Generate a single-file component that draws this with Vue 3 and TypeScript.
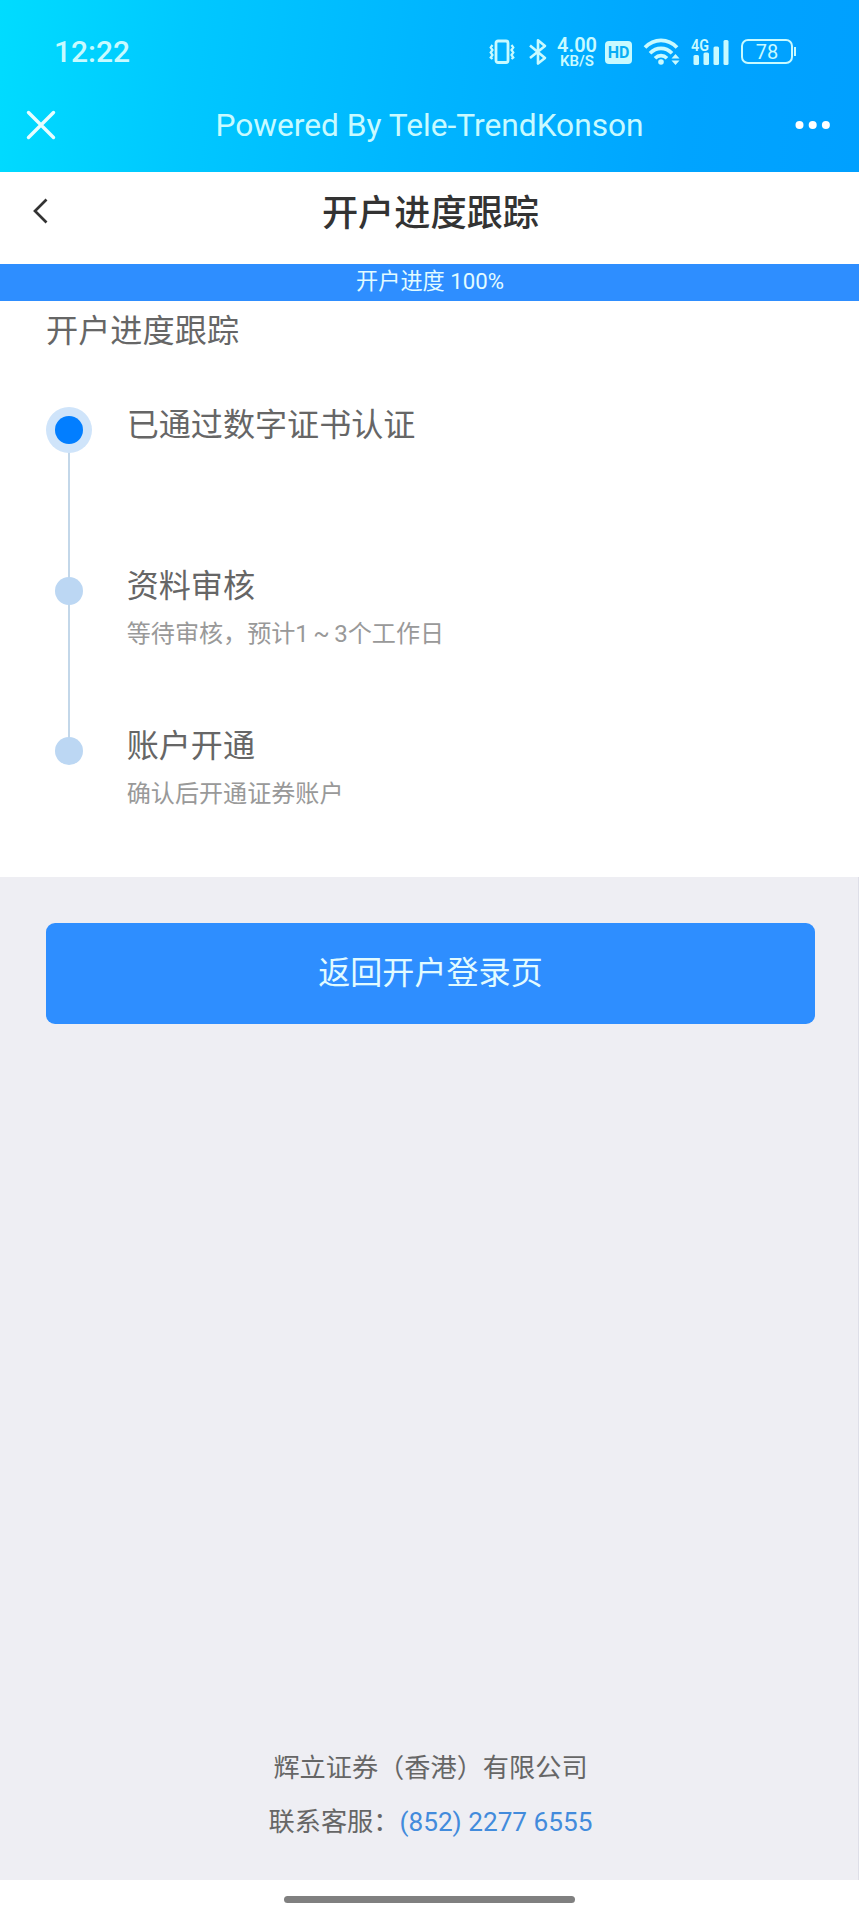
<script setup lang="ts">
interface Step {
  title: string
  note?: string
  active?: boolean
}

const steps: Step[] = [
  { title: '已通过数字证书认证', active: true },
  { title: '资料审核', note: '等待审核，预计1 ~ 3个工作日' },
  { title: '账户开通', note: '确认后开通证券账户' },
]
</script>

<template>
  <div class="screen">
    <header class="app-header">
      <div class="status">
        <span class="clock">12:22</span>
        <div class="indicators">
          <svg class="vibrate" width="28" height="28" viewBox="0 0 28 28" fill="none" stroke="currentColor" stroke-width="2.200">
            <rect x="8" y="3" width="12" height="21.500" rx="2" stroke-width="2.800" />
            <path d="M4.500 7 2.700 9.500 4.500 12 2.700 14.500 4.500 17 2.700 19.500 4.500 21M23.500 7l1.800 2.500-1.800 2.500 1.800 2.500-1.800 2.500 1.800 2.500-1.800 1.500" />
          </svg>
          <svg class="bluetooth" width="20" height="28" viewBox="0 0 20 28" fill="none" stroke="currentColor" stroke-width="2.600" stroke-linejoin="round">
            <path d="M2 7.500 17 20l-7 5.500V2.200l7 5.800L2 20" />
          </svg>
          <div class="speed">
            <span class="rate">4.00</span>
            <span class="unit">KB/S</span>
          </div>
          <span class="hd">HD</span>
          <svg class="wifi" width="38" height="30" viewBox="0 0 38 30" fill="none" stroke="currentColor" stroke-width="3.700">
            <path d="M2 11.500C11 2 25 2 34 11.500" />
            <path d="M7 17.200c6.500-6.500 15.500-6.500 22 0" />
            <path d="M12 22.300c3.500-3.500 8.500-3.500 12 0" />
            <circle cx="18" cy="26" r="2.800" fill="currentColor" stroke="none" />
            <path d="m32.500 18 4 4.500h-8zM32.500 29l4-4.500h-8z" fill="currentColor" stroke="none" />
          </svg>
          <svg class="signal" width="40" height="30" viewBox="0 0 40 30" fill="currentColor">
            <text class="network" x="1" y="14.500" textLength="18" lengthAdjust="spacingAndGlyphs">4G</text>
            <rect x="3.500" y="19" width="5.500" height="10" rx="1.500" />
            <rect x="13.500" y="16.500" width="5.500" height="12.500" rx="1.500" />
            <rect x="23.500" y="10.500" width="5.500" height="18.500" rx="1.500" />
            <rect x="33.500" y="4" width="5" height="25" rx="1.500" />
          </svg>
          <div class="battery">78</div>
        </div>
      </div>
      <div class="titlebar">
        <svg width="30" height="30" viewBox="0 0 30 30" fill="none" stroke="#e8fdff" stroke-width="3.400" stroke-linecap="round">
          <path d="m2.500 2.500 25 25m0-25-25 25" />
        </svg>
        <span class="product">Powered By Tele-TrendKonson</span>
        <svg width="36" height="10" viewBox="0 0 36 10" fill="#fff">
          <circle cx="4.500" cy="5" r="4" />
          <circle cx="17.700" cy="5" r="4" />
          <circle cx="30.900" cy="5" r="4" />
        </svg>
      </div>
    </header>

    <nav class="page-nav">
      <svg width="16" height="28" viewBox="0 0 16 28" fill="none" stroke="#333" stroke-width="2.700">
        <path d="M14.500 2.500 3 14l11.500 11.500" />
      </svg>
      <h1>开户进度跟踪</h1>
    </nav>

    <div class="progress">开户进度 100%</div>

    <section class="tracking">
      <h2>开户进度跟踪</h2>
      <ol>
        <li v-for="step in steps" :key="step.title" :class="{ active: step.active }">
          <div class="rail"><i class="dot"></i></div>
          <div class="detail">
            <h3>{{ step.title }}</h3>
            <p v-if="step.note">{{ step.note }}</p>
          </div>
        </li>
      </ol>
    </section>

    <main class="actions">
      <button type="button">返回开户登录页</button>
      <footer>
        <p>辉立证券（香港）有限公司</p>
        <p>联系客服：<a>(852) 2277 6555</a></p>
      </footer>
    </main>

    <div class="home"><i></i></div>
  </div>
</template>

<style>
body {
  background: #fff;
}
</style>

<style scoped>
* {
  box-sizing: border-box;
}

h1, h2, h3, p, ol {
  margin: 0;
  padding: 0;
  font-weight: 400;
}

.screen {
  display: flex;
  flex-direction: column;
  width: 859px;
  height: 1920px;
  overflow: hidden;
  background: #fff;
  color: #666;
  font-family: Roboto, "Noto Sans CJK SC", sans-serif;
}

.app-header {
  height: 172px;
  flex: none;
  background: linear-gradient(97deg, #00dcff 0%, #00c8ff 22%, #00b5ff 50%, #00a4ff 80%, #00a0ff 100%);
  color: #c8faff;
}

.status {
  display: flex;
  align-items: center;
  justify-content: space-between;
  height: 104px;
  padding: 0 62px 0 54px;
}

.clock {
  padding-bottom: 2px;
  font-size: 30px;
  font-weight: 500;
}

.indicators {
  display: flex;
  align-items: center;
}

.bluetooth {
  margin-left: 12px;
}

.speed {
  display: flex;
  flex-direction: column;
  align-items: center;
  width: 42px;
  margin-left: 8px;
  font-weight: 600;
}

.rate {
  font-size: 20px;
  line-height: 19px;
}

.unit {
  font-size: 15px;
  line-height: 13px;
}

.hd {
  width: 27px;
  height: 23px;
  margin-left: 7px;
  border-radius: 4px;
  background: #c8faff;
  color: #08adf5;
  font-size: 16px;
  font-weight: 700;
  line-height: 24px;
  text-align: center;
}

.wifi {
  margin: -3px 0 0 11px;
}

.signal {
  margin: -3px 0 0 9px;
  overflow: visible;
}

.network {
  font-size: 17px;
  font-weight: 600;
}

.battery {
  position: relative;
  width: 52px;
  height: 25px;
  margin: -1px 4px 0 11px;
  border: 2px solid currentColor;
  border-radius: 7px;
  font-size: 20px;
  line-height: 22px;
  text-align: center;
}

.battery::after {
  content: "";
  position: absolute;
  top: 6px;
  right: -5px;
  width: 2px;
  height: 9px;
  background: currentColor;
}

.titlebar {
  display: flex;
  align-items: center;
  height: 42px;
  padding: 0 28px 0 26px;
}

.product {
  flex: 1;
  padding-left: 8px;
  font-size: 31.700px;
  text-align: center;
}

.page-nav {
  display: grid;
  grid-template-columns: 80px 1fr 80px;
  align-items: center;
  flex: none;
  height: 92px;
  padding-bottom: 13px;
}

.page-nav svg {
  margin: -1px 0 0 32px;
}

.page-nav h1 {
  padding: 4px 0 0 2px;
  color: #333;
  font-size: 36.200px;
  font-weight: 500;
  line-height: 48px;
  text-align: center;
}

.progress {
  flex: none;
  height: 37px;
  padding-left: 1px;
  background: #2e8eff;
  color: #e2fbff;
  font-size: 22.200px;
  line-height: 34px;
  text-align: center;
}

.tracking {
  flex: none;
  height: 576px;
  padding: 6px 46px 0;
}

.tracking h2 {
  font-size: 32.200px;
  line-height: 48px;
}

ol {
  margin-top: 51px;
  list-style: none;
}

li {
  display: flex;
  height: 160.500px;
}

.rail {
  display: flex;
  justify-content: center;
  width: 46px;
  padding-top: 10px;
  background: linear-gradient(#c3d7e9, #c3d7e9) 22px 24px / 2px 100% no-repeat;
}

li + li .rail {
  background-position: 22px 0;
}

li:last-child .rail {
  background-size: 2px 20px;
}

.dot {
  width: 28px;
  height: 28px;
  border-radius: 50%;
  background: #bcd7f3;
}

.active .dot {
  background: #027eff;
  box-shadow: 0 0 0 9px #cfe4fa;
}

.detail {
  padding-left: 34.700px;
}

h3 {
  font-size: 32.100px;
  line-height: 39px;
}

.detail p {
  margin-top: 10px;
  color: #999;
  font-size: 24.100px;
  line-height: 36px;
  word-spacing: -1.500px;
}

.actions {
  display: flex;
  flex: 1;
  flex-direction: column;
  justify-content: space-between;
  padding: 46px 43px 31px 46px;
  border-right: 1px solid #dedfe8;
  background: #eeeef3;
}

button {
  height: 101px;
  padding: 0;
  border: 0;
  border-radius: 9px;
  background: #2e8eff;
  color: #e2fbff;
  font: 400 32.100px/99px Roboto, "Noto Sans CJK SC", sans-serif;
}

footer {
  font-size: 26.200px;
  line-height: 54px;
  text-align: center;
}

footer a {
  color: #428bdc;
}

.home {
  display: flex;
  flex: none;
  justify-content: center;
  height: 40px;
  padding-top: 16px;
}

.home i {
  width: 291px;
  height: 7px;
  border-radius: 4px;
  background: #808080;
}
</style>
